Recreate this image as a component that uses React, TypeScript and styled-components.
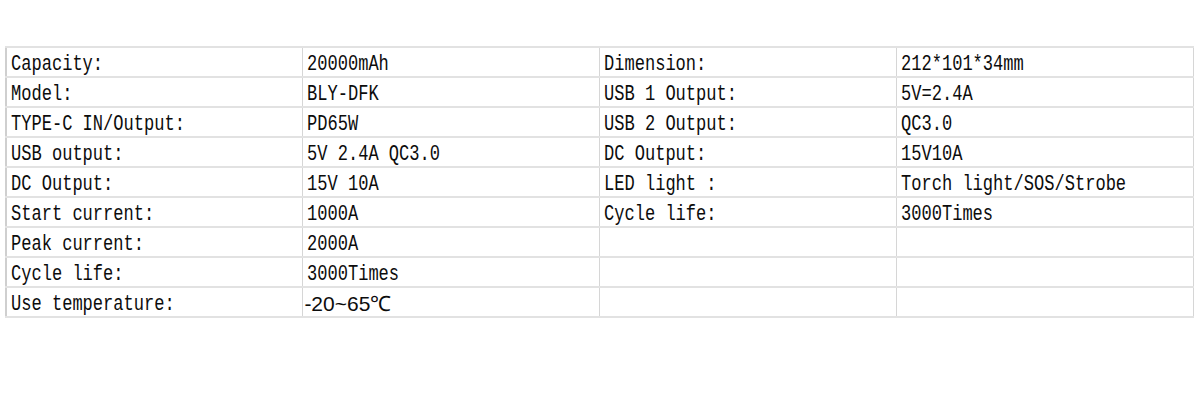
import React from "react";
import styled, { createGlobalStyle } from "styled-components";

const Global = createGlobalStyle`
  html, body {
    margin: 0;
    padding: 0;
    background: #ffffff;
  }
`;

const Page = styled.div`
  width: 1200px;
  height: 400px;
  padding: 46px 0 0 5px;
  box-sizing: border-box;
`;

const Sheet = styled.table`
  width: 1189px;
  border-collapse: collapse;
  table-layout: fixed;
  border-top: 2px solid #c9c9c9;
  border-left: 2px solid #cfcfcf;
`;

const Row = styled.tr`
  height: 30px;
`;

const Cell = styled.td<{ $sans?: boolean }>`
  padding: 5px ${(p) => (p.$sans ? "1px" : "4px")} 0;
  border-top: 2px solid #e2e2e2;
  border-bottom: 2px solid #e2e2e2;
  border-left: 1px solid #d6d6d6;
  border-right: 1px solid #d6d6d6;
  color: #0c0c0c;
  white-space: nowrap;
  overflow: hidden;
  vertical-align: middle;
  line-height: 21px;
`;

/* the sheet's narrow monospaced face: a mono font squeezed sideways */
const Mono = styled.span`
  display: inline-block;
  font-family: "Liberation Mono", "Courier New", monospace;
  font-size: 22px;
  transform: scaleX(0.775);
  transform-origin: left center;
`;

const Sans = styled.span`
  font-family: "Liberation Sans", Arial, sans-serif;
  font-size: 21px;
`;

type Spec = [string, string, string?, string?];

const rows: Spec[] = [
  ["Capacity:", "20000mAh", "Dimension:", "212*101*34mm"],
  ["Model:", "BLY-DFK", "USB 1 Output:", "5V=2.4A"],
  ["TYPE-C IN/Output:", "PD65W", "USB 2 Output:", "QC3.0"],
  ["USB output:", "5V 2.4A QC3.0", "DC Output:", "15V10A"],
  ["DC Output:", "15V 10A", "LED light :", "Torch light/SOS/Strobe"],
  ["Start current:", "1000A", "Cycle life:", "3000Times"],
  ["Peak current:", "2000A"],
  ["Cycle life:", "3000Times"],
  ["Use temperature:", "-20~65℃"],
];

const Text = ({ value }: { value?: string }) =>
  !value ? null : value.includes("℃") ? <Sans>{value}</Sans> : <Mono>{value}</Mono>;

export default function App() {
  return (
    <Page>
      <Global />
      <Sheet>
        <tbody>
          {rows.map((r, i) => (
            <Row key={i}>
              <Cell>
                <Text value={r[0]} />
              </Cell>
              <Cell $sans={r[1].includes("℃")}>
                <Text value={r[1]} />
              </Cell>
              <Cell>
                <Text value={r[2]} />
              </Cell>
              <Cell>
                <Text value={r[3]} />
              </Cell>
            </Row>
          ))}
        </tbody>
      </Sheet>
    </Page>
  );
}
